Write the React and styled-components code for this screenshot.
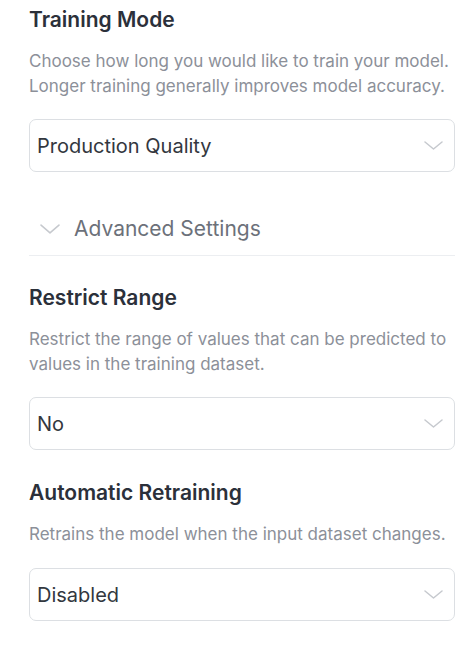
import styled, { createGlobalStyle } from "styled-components";

const GlobalStyle = createGlobalStyle`
    body {
        margin: 0;
        background: #ffffff;
        font-family: Inter, "Noto Sans", sans-serif;
    }
`

const Page = styled.div`
    width: 474px;
    padding: 6px 19px 0 29px;
    box-sizing: border-box;
`

const Section = styled.section`
    display: flex;
    flex-direction: column;
    margin-top: ${props => props.top || 0}px;
`

const Title = styled.h2`
    margin: 0;
    font-size: 21px;
    line-height: 28px;
    font-weight: 600;
    color: #2b303a;
`

const Desc = styled.p`
    margin: 15px 0 0;
    font-size: 17px;
    line-height: 25px;
    color: #8c9099;
`

const Select = styled.div`
    margin-top: ${props => props.gap || 20}px;
    height: 53px;
    box-sizing: border-box;
    border: 1px solid #dcdfe3;
    border-radius: 7px;
    display: flex;
    align-items: center;
    justify-content: space-between;
    padding: 0 11px 0 7px;
    font-size: 20px;
    color: #33373e;
`

const Toggle = styled.div`
    margin-top: 43px;
    padding: 0 0 12px 11px;
    display: flex;
    align-items: center;
    gap: 14px;
    border-bottom: 1px solid #eceef1;
    font-size: 21px;
    line-height: 28px;
    color: #6c717a;
`

function Chevron({ w = 19, h = 9, color = "#c6c9ce" }) {
    return (
        <svg width={w} height={h} viewBox="0 0 19 9" fill="none" preserveAspectRatio="none">
            <path d="M1 1 L9.5 8 L18 1" stroke={color} strokeWidth="1.5" strokeLinecap="round" strokeLinejoin="round" />
        </svg>
    )
}

function Field({ value, gap }) {
    return (
        <Select gap={gap}>
            <span>{value}</span>
            <Chevron />
        </Select>
    )
}

export default function App() {
    return (
        <Page>
            <GlobalStyle />
            <Section>
                <Title>Training Mode</Title>
                <Desc>
                    Choose how long you would like to train your model.
                    Longer training generally improves model accuracy.
                </Desc>
                <Field value="Production Quality" />
            </Section>

            <Toggle>
                <Chevron w={20} h={10} />
                <span>Advanced Settings</span>
            </Toggle>

            <Section top={28}>
                <Title>Restrict Range</Title>
                <Desc>Restrict the range of values that can be predicted to values in the training dataset.</Desc>
                <Field value="No" />
            </Section>

            <Section top={29}>
                <Title>Automatic Retraining</Title>
                <Desc>Retrains the model when the input dataset changes.</Desc>
                <Field value="Disabled" gap={21} />
            </Section>
        </Page>
    )
}
